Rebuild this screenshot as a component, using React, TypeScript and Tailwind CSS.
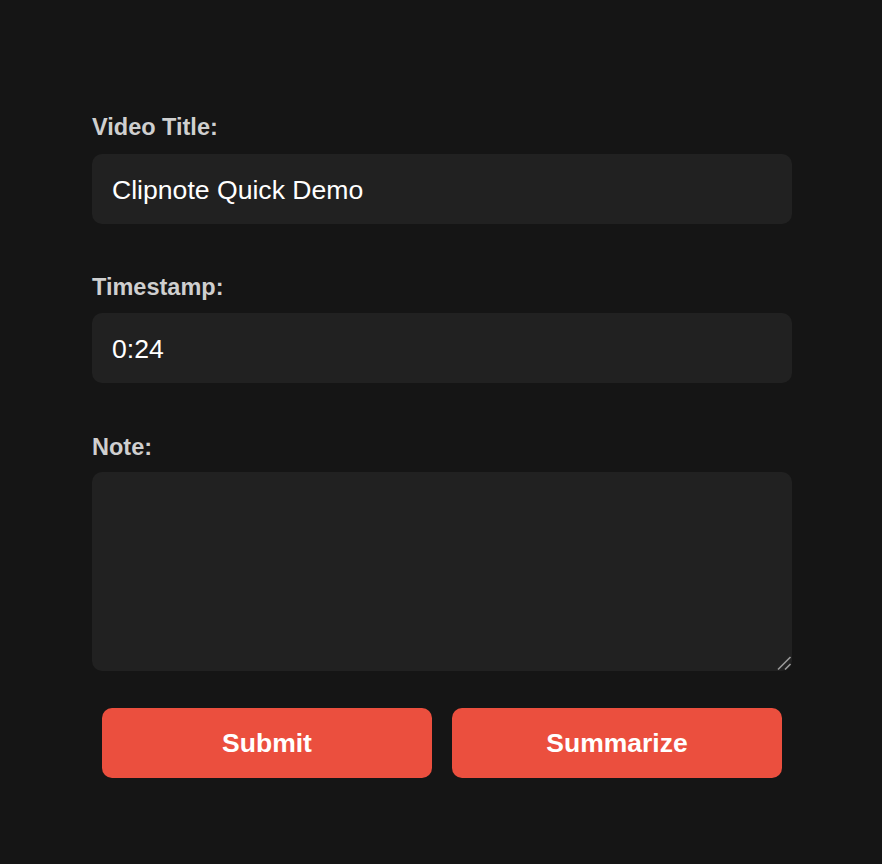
import React from "react";

export default function App() {
  return (
    <div
      className="min-h-[864px] w-full bg-[#151515]"
      style={{ fontFamily: '"Liberation Sans", Arial, sans-serif' }}
    >
      <div className="mx-[92px] flex w-[700px] flex-col pt-[112px]">
        <label className="mb-[12px] block text-[23.5px] font-bold leading-[30px] text-[#cfcfcf]">
          Video Title:
        </label>
        <input
          className="h-[70px] w-full rounded-[10px] bg-[#212121] px-[20px] pt-[2px] text-[26.6px] text-white outline-none"
          defaultValue="Clipnote Quick Demo"
        />
        <label className="mb-[11px] mt-[48px] block text-[23.5px] font-bold leading-[30px] text-[#cfcfcf]">
          Timestamp:
        </label>
        <input
          className="h-[70px] w-full rounded-[10px] bg-[#212121] px-[20px] pt-[2px] text-[26.6px] text-white outline-none"
          defaultValue="0:24"
        />
        <label className="mb-[10px] mt-[49px] block text-[23.5px] font-bold leading-[30px] text-[#cfcfcf]">
          Note:
        </label>
        <div className="relative">
          <textarea className="block h-[199px] w-full resize-none rounded-[10px] bg-[#212121] px-[20px] py-[16px] text-[26.6px] text-white outline-none" />
          <svg
            className="pointer-events-none absolute bottom-0 right-0"
            width="16"
            height="16"
            viewBox="0 0 16 16"
          >
            <line x1="2" y1="14.5" x2="14.5" y2="2" stroke="#9a9a9a" strokeWidth="1.6" />
            <line x1="9" y1="14.5" x2="14.5" y2="9" stroke="#9a9a9a" strokeWidth="1.6" />
          </svg>
        </div>
        <div className="mt-[37px] flex gap-[20px] px-[10px]">
          <button className="h-[70px] flex-1 rounded-[10px] bg-[#eb4f3e] pt-[2px] text-[26.5px] font-bold text-white">
            Submit
          </button>
          <button className="h-[70px] flex-1 rounded-[10px] bg-[#eb4f3e] pt-[2px] text-[26.5px] font-bold text-white">
            Summarize
          </button>
        </div>
      </div>
    </div>
  );
}
